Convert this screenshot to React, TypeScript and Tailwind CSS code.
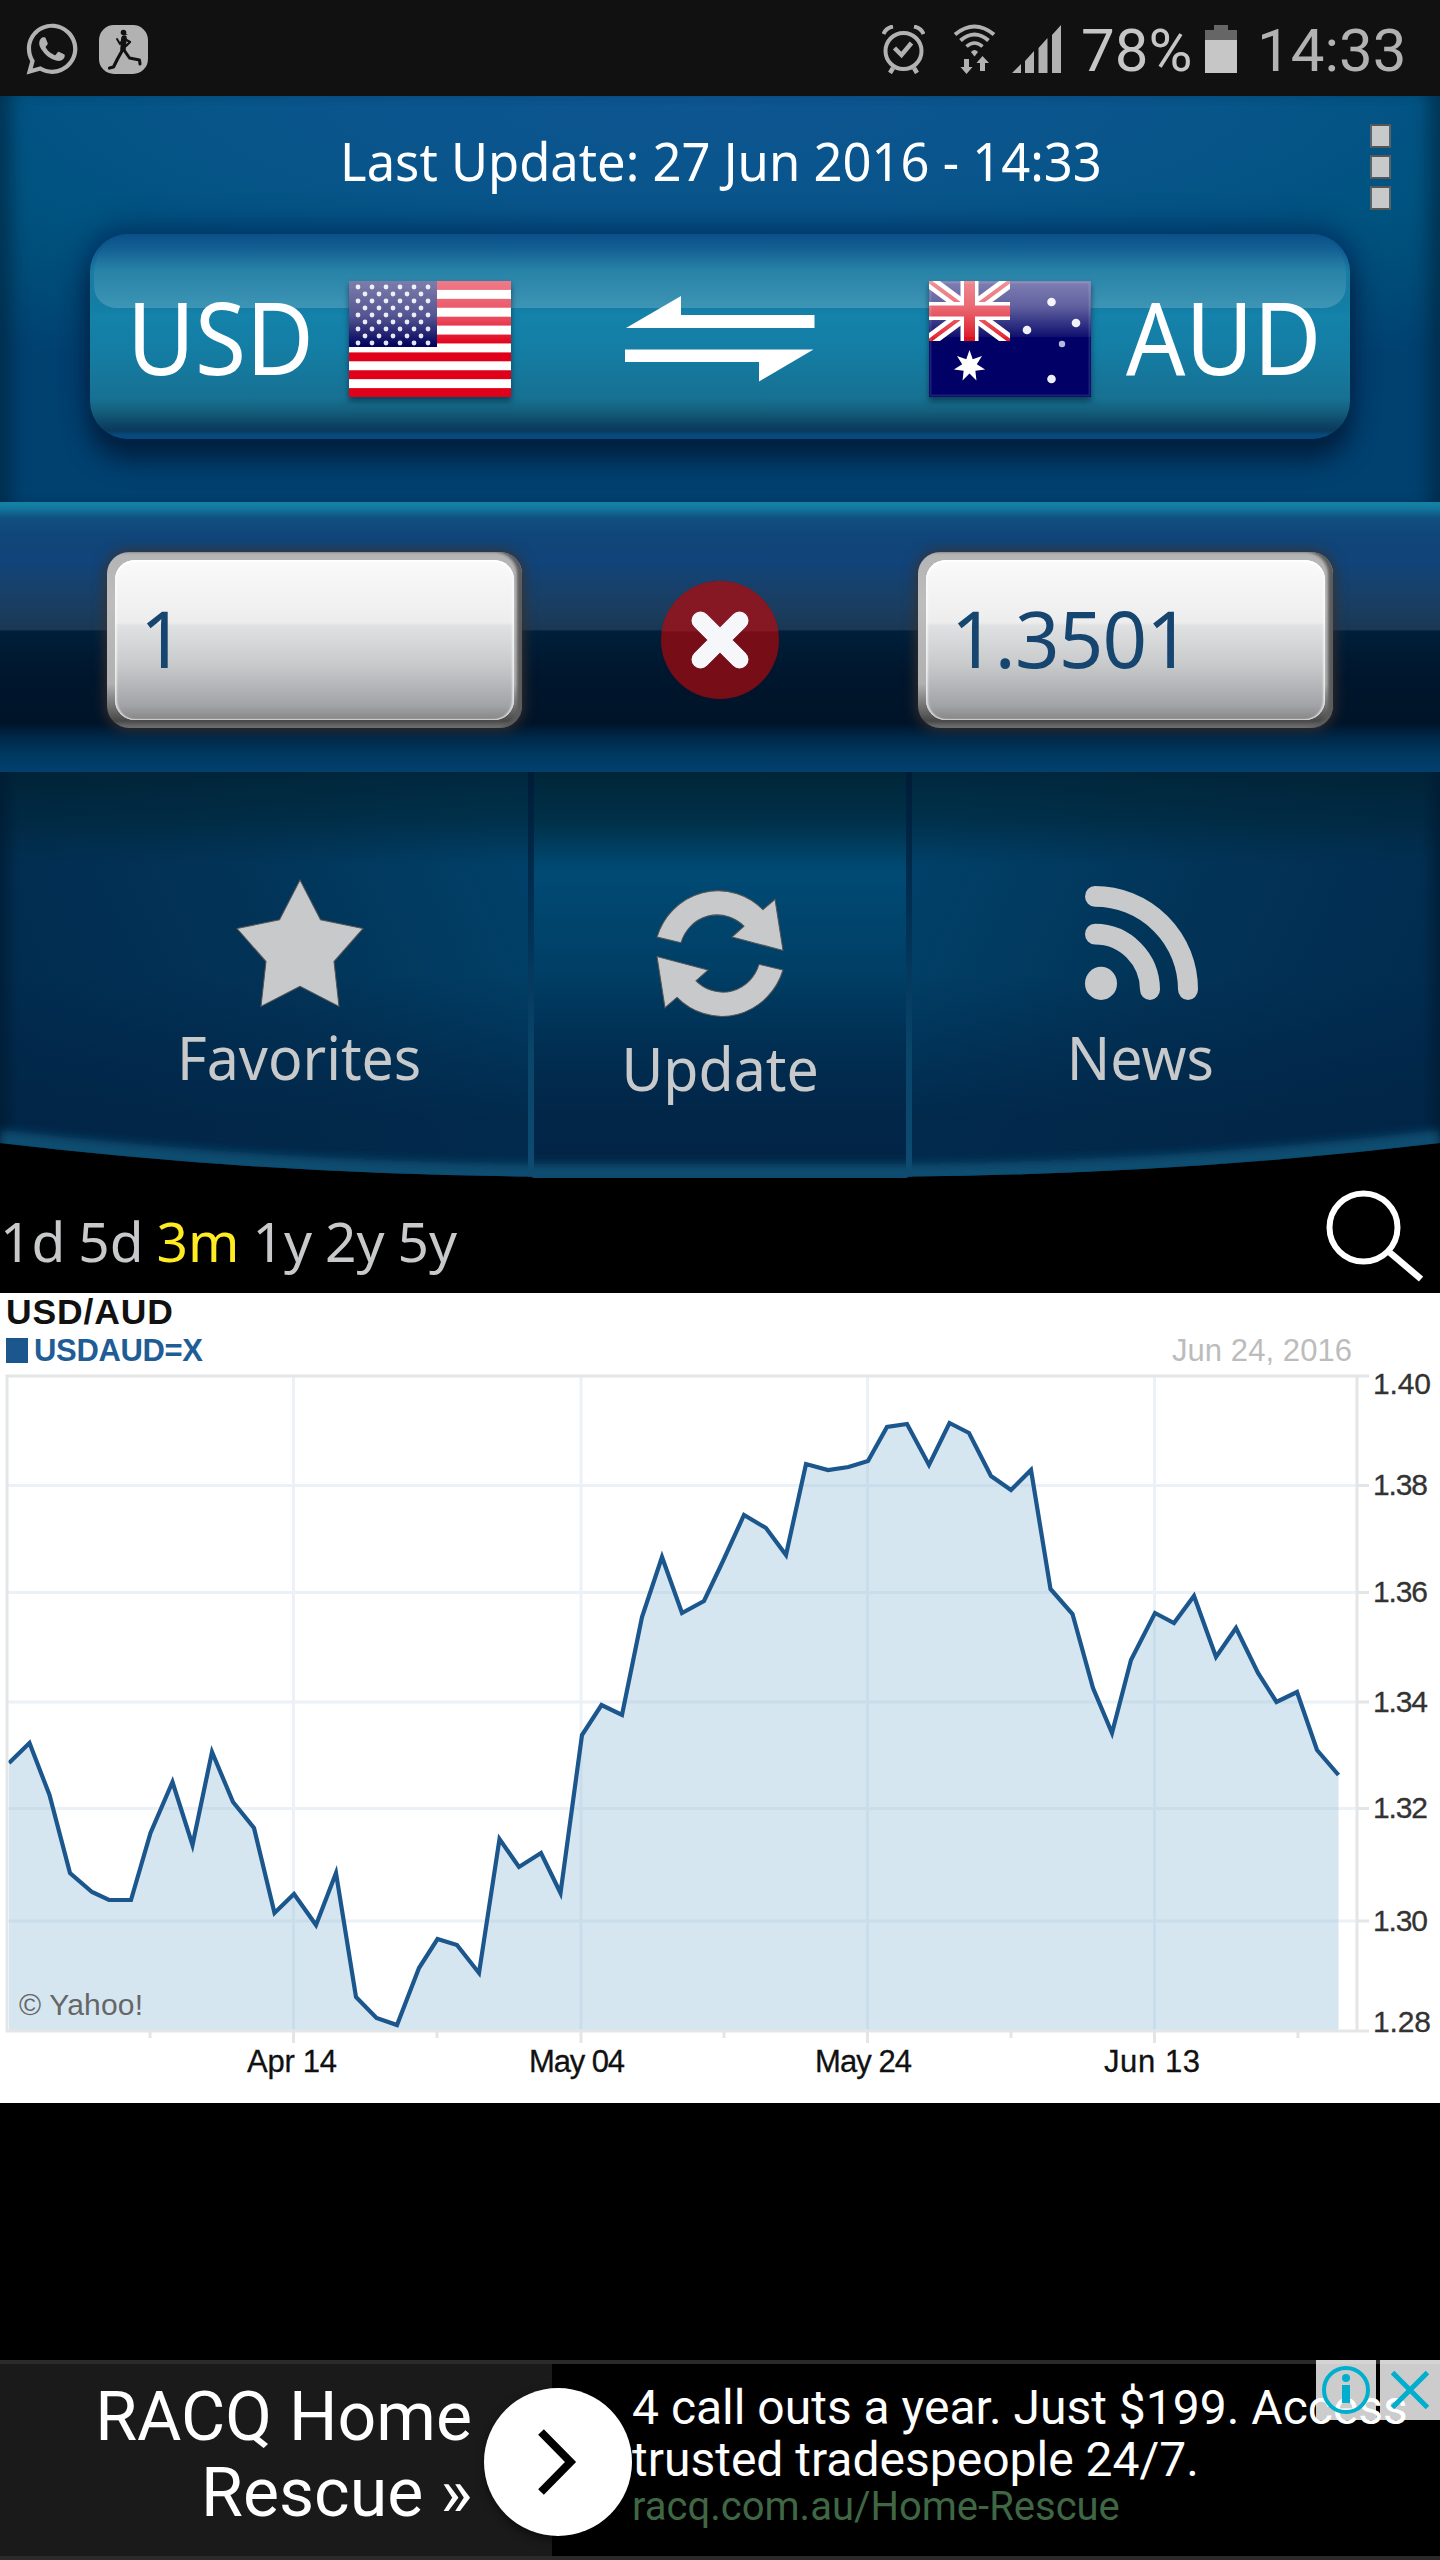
import { FaWhatsapp } from "react-icons/fa";

const series = [
  [9, 1763], [29.5, 1743], [49.5, 1795], [70, 1873], [92, 1892], [109, 1900], [131, 1900],
  [150.5, 1833], [172.5, 1782], [192.5, 1845], [212, 1752], [233, 1802], [254, 1828],
  [274.5, 1913], [294, 1894], [316, 1925], [336, 1873], [356, 1997], [376.5, 2018],
  [397, 2025], [419, 1968], [437.5, 1939], [457, 1945], [479, 1973], [499.5, 1839],
  [519, 1867], [541, 1853], [560.5, 1893], [582, 1735], [601.5, 1705], [622, 1715],
  [642, 1617], [662, 1557], [682, 1613], [704, 1601], [723, 1561], [744, 1515], [766, 1528],
  [786, 1555], [806, 1464], [828, 1470], [848.5, 1467], [868, 1461], [887, 1427],
  [907, 1424], [929, 1465], [949.5, 1423], [969, 1433], [991, 1476], [1011, 1490],
  [1031, 1470], [1050.5, 1589], [1072.5, 1614], [1093, 1688], [1112, 1733], [1131, 1660],
  [1155, 1613], [1174, 1623], [1194, 1596], [1216, 1657], [1236, 1628], [1258, 1673],
  [1276.5, 1702], [1297, 1692], [1317, 1750], [1338.5, 1775],
];

const yAxis = [
  { label: "1.40", baseline: 1394, width: 54 },
  { label: "1.38", line: 1485.5, baseline: 1495, width: 51 },
  { label: "1.36", line: 1592.5, baseline: 1602, width: 51 },
  { label: "1.34", line: 1702, baseline: 1711.5, width: 51 },
  { label: "1.32", line: 1808.5, baseline: 1818, width: 51 },
  { label: "1.30", line: 1921, baseline: 1931, width: 51 },
  { label: "1.28", baseline: 2032, width: 54 },
];

const xAxis = [
  { label: "Apr 14", x: 293.5, start: 247, width: 90 },
  { label: "May 04", x: 581, start: 529, width: 96 },
  { label: "May 24", x: 867.5, start: 815, width: 97 },
  { label: "Jun 13", x: 1154.5, start: 1104, width: 96 },
];

const ranges = ["1d", "5d", "3m", "1y", "2y", "5y"];

function starPoints(cx: number, cy: number, n: number, outer: number, inner: number) {
  return Array.from({ length: n * 2 }, (_, i) => {
    const r = i % 2 ? inner : outer;
    const a = (Math.PI * i) / n - Math.PI / 2;
    return `${cx + r * Math.cos(a)},${cy + r * Math.sin(a)}`;
  }).join(" ");
}

function StatusBar() {
  return (
    <div className="flex h-24 shrink-0 items-center justify-between bg-[#111] pr-[32px] pl-[26px] pt-0.5 text-[#b2b2b2]">
      <div className="flex items-center gap-[18px]">
        <FaWhatsapp size={58} className="-ml-[3px]" />
        <svg width="49" height="49" viewBox="0 0 49 49">
          <rect width="49" height="49" rx="15" fill="#b2b2b2" />
          <g stroke="#111" fill="none" strokeLinecap="round" strokeLinejoin="round">
            <path d="M18 14l3 5 3-5" strokeWidth="2" />
            <path d="M24 13l7 4-4 4" strokeWidth="2.4" />
            <path d="M25 13l-1 11" strokeWidth="5.500" />
            <path d="M23.500 25l-5 9-4 8-4 1" strokeWidth="3.200" />
            <path d="M25 25l5.500 8 10 2 .5 4" strokeWidth="3" />
          </g>
          <circle cx="24.500" cy="7.500" r="2.800" fill="#111" />
          <path d="M26 8.500l3 1-3 .5z" fill="#111" />
        </svg>
      </div>
      <div className="flex items-center font-[Roboto,sans-serif] text-[60px] leading-none">
        <svg width="43" height="49" viewBox="0 0 43 49" fill="none" stroke="#b2b2b2">
          <circle cx="21.500" cy="26" r="18" strokeWidth="4" />
          <path d="M12.500 23l7 7 10-12" strokeWidth="4.500" />
          <path d="M1.500 9C3 5 6 2.500 11 1.500M41.500 9C40 5 37 2.500 32 1.500" strokeWidth="4" />
          <path d="M11 43l-3 5M32 43l3 5" strokeWidth="4.500" />
        </svg>
        <svg className="ml-[28px]" width="43" height="50" viewBox="0 0 43 50" fill="none" stroke="#b2b2b2">
          <path d="M2 10.500Q21.500-5.500 41 10.500" strokeWidth="4" />
          <path d="M7.500 16.500Q21.500 4.500 35.500 16.500" strokeWidth="4" />
          <path d="M13.500 22.500Q21.500 15.500 29.500 22.500" strokeWidth="3.600" />
          <path d="M18 28q3.500-4 7 0l-3.500 4.500z" fill="#b2b2b2" stroke="none" />
          <path d="M11 35h5v8h3.500l-6 7-6-7H11zM27 47h5v-8h4l-6.500-7-6 7H27z" fill="#b2b2b2" stroke="none" />
        </svg>
        <svg className="ml-[16px]" width="49" height="48" viewBox="0 0 49 48" fill="#b2b2b2">
          <path d="M0 48h9V39zM13 48h9V26l-9 10zM26.500 48h9V13l-9 10zM40 48h9V0l-9 10z" />
        </svg>
        <span className="ml-[20px] w-[112px] pt-1 text-[#c6c6c6]">78%</span>
        <svg className="ml-[12px]" width="32" height="48" viewBox="0 0 32 48">
          <path d="M0 5h9V0h14v5h9v10H0z" fill="#666" />
          <path d="M0 15h32v33H0z" fill="#c6c6c6" />
        </svg>
        <span className="ml-[20px] w-[151px] pt-1">14:33</span>
      </div>
    </div>
  );
}

function UsFlag() {
  return (
    <svg width="162" height="116" viewBox="0 0 162 116" className="shadow-[0_4px_6px_rgba(0,30,50,.6)]">
      <defs>
        <linearGradient id="gloss" x1="0" y1="0" x2="0" y2="1">
          <stop offset="0" stopColor="#fff" stopOpacity=".48" />
          <stop offset=".3" stopColor="#fff" stopOpacity=".32" />
          <stop offset=".55" stopColor="#fff" stopOpacity="0" />
        </linearGradient>
        <linearGradient id="glossHalf" x1="0" y1="0" x2="0" y2="1">
          <stop offset="0" stopColor="#fff" stopOpacity=".5" />
          <stop offset=".45" stopColor="#fff" stopOpacity=".38" />
          <stop offset="1" stopColor="#fff" stopOpacity=".06" />
        </linearGradient>
      </defs>
      <rect width="162" height="116" fill="#fff" />
      {Array.from({ length: 7 }, (_, i) => (
        <rect key={i} y={i * 17.85} width="162" height="8.900" fill="#e1001a" />
      ))}
      <rect width="88" height="66" fill="#05055f" />
      {Array.from({ length: 9 }, (_, row) =>
        Array.from({ length: row % 2 ? 5 : 6 }, (_, col) => (
          <circle key={`${row}-${col}`} cx={(row % 2 ? 16 : 9) + col * 14} cy={6 + row * 7} r="2.400" fill="#e4e4f2" />
        ))
      )}
      <rect width="162" height="116" fill="url(#gloss)" />
    </svg>
  );
}

function AuFlag() {
  const stars = [[122.5, 21], [147, 42], [98, 49], [122.5, 98]];
  return (
    <svg width="162" height="116" viewBox="0 0 162 116" className="shadow-[0_4px_6px_rgba(0,30,50,.6)]">
      <rect width="162" height="116" fill="#000066" />
      <svg width="81" height="60" viewBox="0 0 81 60">
        <path d="M0 0L81 60M81 0L0 60" stroke="#fff" strokeWidth="13" />
        <path d="M0 0L81 60M81 0L0 60" stroke="#e1202c" strokeWidth="4" />
        <path d="M40.500 0V60M0 30H81" stroke="#fff" strokeWidth="18" />
        <path d="M40.500 0V60M0 30H81" stroke="#dd1020" strokeWidth="11" />
      </svg>
      <polygon points={starPoints(40.5, 85, 7, 16, 7.5)} fill="#fff" />
      {stars.map(([x, y]) => (
        <circle key={`${x}-${y}`} cx={x} cy={y} r="4.300" fill="#eeeef8" />
      ))}
      <circle cx="133" cy="63" r="3.200" fill="#b8b8da" />
      <rect width="162" height="56" fill="url(#glossHalf)" />
      <rect x="1.500" y="1.500" width="159" height="113" fill="none" stroke="#fff" strokeOpacity=".12" strokeWidth="2" />
    </svg>
  );
}

function Header() {
  return (
    <header className="flex h-[406px] shrink-0 flex-col items-center bg-[radial-gradient(ellipse_85%_75%_at_50%_0%,#0e5592_0%,#08558a_40%,#005380_65%,#004a76_85%,#004170_100%)] shadow-[inset_22px_0_16px_-10px_rgba(0,35,60,.6),inset_-22px_0_16px_-10px_rgba(0,35,60,.6)]">
      <div className="flex h-[138px] w-full justify-between pr-[49px] pl-[70px]">
        <p className="flex-1 origin-center scale-x-[.957] pt-[35px] pl-[2px] text-center font-['Noto_Sans',sans-serif] text-[53px] leading-[60px] whitespace-nowrap text-white">
          Last Update: 27 Jun 2016 - 14:33
        </p>
        <div className="flex w-[21px] shrink-0 flex-col gap-[7px] pt-[28px]">
          {[0, 1, 2].map((dot) => (
            <div key={dot} className="h-[24px] border-2 border-y-[#555] border-x-[#5b6468] bg-[#c8c9cb]" />
          ))}
        </div>
      </div>
      <div className="relative flex h-[205px] w-[1260px] items-center rounded-[38px] bg-[linear-gradient(to_bottom,#0b5088_0%,#0d5b91_7%,#1a7ba2_18%,#147ea5_36%,#1482aa_40%,#147ea5_55%,#177193_80%,#14607e_86%,#0c3f61_94%,#0a3a5e_96%,#07497c_98%,#064a80_100%)] shadow-[0_20px_26px_0px_#001f3e,0_-6px_26px_4px_rgba(0,45,95,.7)]">
        <div className="absolute inset-x-1 top-0 h-[74px] rounded-[38px_38px_22px_22px] bg-linear-to-b from-white/0 via-white/6 to-white/18" />
        <div className="relative flex w-full items-center pt-[4px] pl-[37px] font-['Noto_Sans',sans-serif] text-[100px] leading-none text-white">
          <span className="w-[222px] origin-left scale-x-[.93] pb-[6px]">USD</span>
          <UsFlag />
          <svg className="mx-[114px]" width="190" height="86" viewBox="0 0 190 86" fill="#fff">
            <path d="M1 32L56 0V19H189.500V32zM0 53.500H188.500L134 85.500V66H0z" />
          </svg>
          <AuFlag />
          <span className="ml-[35px] origin-left scale-x-[.93] pb-[6px]">AUD</span>
        </div>
      </div>
    </header>
  );
}

function AmountField({ value }: { value: string }) {
  return (
    <div className="h-[176px] w-[415px] rounded-[22px] bg-[linear-gradient(to_bottom,#b4b4b4_0%,#bdbdbd_30%,#b0b0b0_75%,#575757_93%,#484848_96%,#777_100%)] p-[8px] shadow-[0_0_12px_3px_rgba(60,50,45,.75),inset_-5px_0_3px_#5c5c5c]">
      <div className="flex h-full items-center rounded-[20px] bg-[linear-gradient(to_bottom,#fafafa_0%,#ededee_39%,#e0e1e2_41%,#c9cacb_65%,#a2a3a7_91%,#868686_100%)] pb-[5px] pl-[25px] font-['Noto_Sans',sans-serif] text-[78px] leading-none text-[#16456f] shadow-[inset_0_2px_2px_#fff,inset_2px_0_2px_rgba(255,255,255,.6),inset_-2px_0_2px_rgba(255,255,255,.6),inset_0_-1px_1px_#bbb]">
        <span className="tracking-[-.8px]">{value}</span>
      </div>
    </div>
  );
}

function AmountBand() {
  return (
    <section className="flex h-[270px] shrink-0 items-center justify-between bg-[linear-gradient(to_bottom,#1482a5_0%,#127aa0_2%,#10507f_6%,#10467a_12%,#11447a_22%,#1a3e62_38%,#1a3855_47.4%,#001f3a_47.700%,#00162c_65%,#001429_82%,#002848_87%,#003a62_94%,#03406f_100%)] px-[107px] pt-[6px]">
      <AmountField value="1" />
      <svg width="118" height="118" viewBox="0 0 118 118">
        <circle cx="59" cy="59" r="59" fill="#760d17" />
        <path d="M.6 50.500A59 59 0 0 1 117.400 50.500z" fill="#861823" />
        <path d="M39.500 39.500L78.500 78.500M78.500 39.500L39.500 78.500" stroke="#f6f7fa" strokeWidth="18" strokeLinecap="round" />
      </svg>
      <AmountField value="1.3501" />
    </section>
  );
}

function TabsBackdrop() {
  return (
    <svg className="absolute inset-0" width="1440" height="406" viewBox="0 0 1440 406">
      <defs>
        <linearGradient id="side" x1="0" y1=".65" x2="1" y2=".3">
          <stop offset="0" stopColor="#012b4e" />
          <stop offset=".5" stopColor="#023357" />
          <stop offset="1" stopColor="#014068" />
        </linearGradient>
        <linearGradient id="mid" x1="0" y1="0" x2="0" y2="1">
          <stop offset="0" stopColor="#013654" />
          <stop offset=".25" stopColor="#004a74" />
          <stop offset=".55" stopColor="#003c62" />
          <stop offset="1" stopColor="#022648" />
        </linearGradient>
        <linearGradient id="topShade" x1="0" y1="0" x2="0" y2="1">
          <stop offset="0" stopColor="#00202f" stopOpacity=".75" />
          <stop offset=".12" stopColor="#002638" stopOpacity=".6" />
          <stop offset=".23" stopColor="#002a40" stopOpacity="0" />
          <stop offset=".5" stopColor="#002244" stopOpacity="0" />
          <stop offset=".85" stopColor="#022344" stopOpacity=".7" />
        </linearGradient>
        <linearGradient id="divider" x1="0" y1="0" x2="0" y2="1">
          <stop offset="0" stopColor="#001c38" />
          <stop offset=".35" stopColor="#013054" />
          <stop offset=".7" stopColor="#0a456a" />
          <stop offset="1" stopColor="#0d4b70" />
        </linearGradient>
        <linearGradient id="edge" x1="0" y1="0" x2="1" y2="0">
          <stop offset="0" stopColor="#001c34" stopOpacity=".8" />
          <stop offset="1" stopColor="#001c34" stopOpacity="0" />
        </linearGradient>
        <filter id="soft" x="-5%" y="-50%" width="110%" height="200%">
          <feGaussianBlur stdDeviation="5" />
        </filter>
        <clipPath id="bowl">
          <path d="M0 0H1440V371Q1180 402 909 404.500L906 406H534L531 404.500Q260 402 0 371z" />
        </clipPath>
      </defs>
      <g clipPath="url(#bowl)">
        <rect width="531" height="406" fill="url(#side)" />
        <rect width="531" height="406" fill="url(#side)" transform="translate(1440 0) scale(-1 1)" />
        <rect x="531" width="378" height="406" fill="url(#mid)" />
        <rect width="1440" height="406" fill="url(#topShade)" />
        <rect width="18" height="406" fill="url(#edge)" />
        <rect width="18" height="406" fill="url(#edge)" transform="translate(1440 0) scale(-1 1)" />
        <path d="M0 368Q260 399 531 402L909 402Q1180 399 1440 368" fill="none" stroke="#0e4d71" strokeWidth="20" filter="url(#soft)" />
        <rect x="528" width="6" height="406" fill="url(#divider)" />
        <rect x="906" width="6" height="406" fill="url(#divider)" />
      </g>
    </svg>
  );
}

function Tabs() {
  const label = "scale-x-[.938] font-['Noto_Sans',sans-serif] text-[61px] leading-[70px] text-[#c8c9cb]";
  return (
    <nav className="relative h-[406px] shrink-0">
      <TabsBackdrop />
      <div className="relative flex h-full">
        <button className="flex w-[531px] flex-col items-center pt-[107px] pl-[68px]">
          <svg width="128" height="130" viewBox="236 875 128 126" preserveAspectRatio="none" fill="#c8c9cb" stroke="#555" strokeWidth="1">
            <path d="M300 876L320.500 914.500 363 923 334 955 339 998.500 300 979 261 998.500 266 955 237 923 279.500 914.500z" />
          </svg>
          <span className={`${label} mt-[13px]`}>Favorites</span>
        </button>
        <button className="flex w-[378px] flex-col items-center pt-[116px]">
          <svg width="130" height="130" viewBox="655 883 130 126" preserveAspectRatio="none" fill="#c8c9cb" stroke="#555" strokeWidth="1">
            <path id="turn" d="M657 930.500A64 64 0 0 1 763 904L775 894 783 943.500 732 930.500 744 920A38 38 0 0 0 681 936z" />
            <use href="#turn" transform="rotate(180 720 946.500)" />
          </svg>
          <span className={`${label} mt-[15px]`}>Update</span>
        </button>
        <button className="flex w-[531px] flex-col items-center pt-[113px] pr-[68px]">
          <svg width="116" height="116" viewBox="1083 881 116 112" preserveAspectRatio="none" fill="none" stroke="#c8c9cb" strokeWidth="20" strokeLinecap="round">
            <circle cx="1101" cy="976" r="16" fill="#c8c9cb" stroke="none" />
            <path d="M1095 928.500A55 54 0 0 1 1150 982" />
            <path d="M1095 892A93 90 0 0 1 1188 982" />
          </svg>
          <span className={`${label} mt-[21px]`}>News</span>
        </button>
      </div>
    </nav>
  );
}

function RangeRow() {
  return (
    <div className="flex h-[115px] shrink-0 justify-between bg-black">
      <div className="flex gap-[13px] pt-[33px] font-['Noto_Sans',sans-serif] text-[55px] leading-[60px] text-[#c8c9cb]">
        {ranges.map((range) => (
          <span key={range} className={range === "3m" ? "text-[#ffeb22]" : ""}>
            {range}
          </span>
        ))}
      </div>
      <svg className="mt-[12px] mr-[17px]" width="98" height="92" viewBox="1325 1190 98 92" fill="none" stroke="#fff">
        <circle cx="1363.500" cy="1227.500" r="34" strokeWidth="6" />
        <path d="M1388 1251L1421 1279" strokeWidth="6.500" />
      </svg>
    </div>
  );
}

function Chart() {
  const line = series.map(([x, y]) => `${x},${y}`).join(" ");
  return (
    <svg className="shrink-0" width="1440" height="810" viewBox="0 1293 1440 810" fontFamily="'Liberation Sans', Arial, sans-serif">
      <rect y="1293" width="1440" height="810" fill="#fff" />
      <text x="6" y="1324" fontSize="35.500" fontWeight="bold" fill="#111" textLength="167">USD/AUD</text>
      <rect x="6" y="1338" width="22" height="25" fill="#1b568d" />
      <text x="34" y="1360.500" fontSize="31" fontWeight="bold" fill="#1f5d96" textLength="169">USDAUD=X</text>
      <text x="1172" y="1360.500" fontSize="31" fill="#bcbcbc" textLength="180">Jun 24, 2016</text>

      <g stroke="#ebf1f6" strokeWidth="3">
        {xAxis.map((t) => <path key={t.label} d={`M${t.x} 1376V2031`} />)}
        {yAxis.map((t) => t.line && <path key={t.label} d={`M7 ${t.line}H1357`} />)}
      </g>
      <polygon points={`9,2030 ${line} 1338.5,2030`} fill="#8fbbd9" fillOpacity=".37" />
      <polyline points={line} fill="none" stroke="#1b568d" strokeWidth="4.200" />

      <g stroke="#e4e5e6" strokeWidth="3" fill="none">
        <path d="M1369 1376H7V2031H1369M1357 1376V2031" />
        {yAxis.map((t) => t.line && <path key={t.label} d={`M1357 ${t.line}H1369`} />)}
        {xAxis.map((t) => <path key={t.label} d={`M${t.x} 2031V2043`} />)}
        {[150, 437, 724, 1011, 1298].map((x) => <path key={x} d={`M${x} 2031V2038`} />)}
      </g>

      {yAxis.map((t) => (
        <text key={t.label} x="1373" y={t.baseline} fontSize="30" fill="#333" stroke="#333" strokeWidth=".3" textLength={t.width + 4}>
          {t.label}
        </text>
      ))}
      {xAxis.map((t) => (
        <text key={t.label} x={t.start} y="2072" fontSize="31" fill="#111" stroke="#111" strokeWidth=".3" textLength={t.width}>
          {t.label}
        </text>
      ))}
      <text x="19" y="2015" fontSize="30" fill="#666" textLength="124">© Yahoo!</text>
    </svg>
  );
}

function AdBanner() {
  return (
    <aside className="relative mt-auto flex h-[200px] shrink-0 border-y-4 border-[#2a2a2a] font-[Roboto,sans-serif] text-white">
      <div className="w-[552px] bg-[#1a1a1a] pt-[15px] pr-[80px] text-right text-[68px] leading-[76px]">
        RACQ Home
        <br />
        Rescue »
      </div>
      <div className="flex-1 bg-black pt-[18px] pl-[80px] text-[48px] leading-[52px] whitespace-nowrap">
        <p>4 call outs a year. Just $199. Access</p>
        <p>trusted tradespeople 24/7.</p>
        <p className="text-[40px] leading-[41px] text-[#3f6744]">racq.com.au/Home-Rescue</p>
      </div>
      <div className="absolute top-[24px] left-[484px] flex size-[148px] items-center justify-center rounded-full bg-white pr-[2px] shadow-[0_4px_8px_rgba(0,0,0,.5)]">
        <svg width="40" height="66" viewBox="0 0 40 66" fill="none" stroke="#000" strokeWidth="8">
          <path d="M4 3L33.500 33 4 63" />
        </svg>
      </div>
      <div className="absolute -top-1 right-0 flex gap-1">
        <div className="flex size-[60px] items-center justify-center bg-white/80">
          <svg width="50" height="50" viewBox="0 0 50 50" fill="#00aecd">
            <circle cx="25" cy="25" r="22" fill="none" stroke="#00aecd" strokeWidth="4" />
            <circle cx="25" cy="13" r="4" />
            <path d="M21 20h8v18h-8z" />
          </svg>
        </div>
        <div className="flex size-[60px] items-center justify-center bg-white/80">
          <svg width="38" height="38" viewBox="0 0 38 38" stroke="#00aecd" strokeWidth="5">
            <path d="M1.500 1.500L36.500 36.500M36.500 1.500L1.500 36.500" />
          </svg>
        </div>
      </div>
    </aside>
  );
}

export default function App() {
  return (
    <div className="flex h-[2560px] w-[1440px] flex-col overflow-hidden bg-black">
      <StatusBar />
      <Header />
      <AmountBand />
      <Tabs />
      <RangeRow />
      <Chart />
      <AdBanner />
    </div>
  );
}
